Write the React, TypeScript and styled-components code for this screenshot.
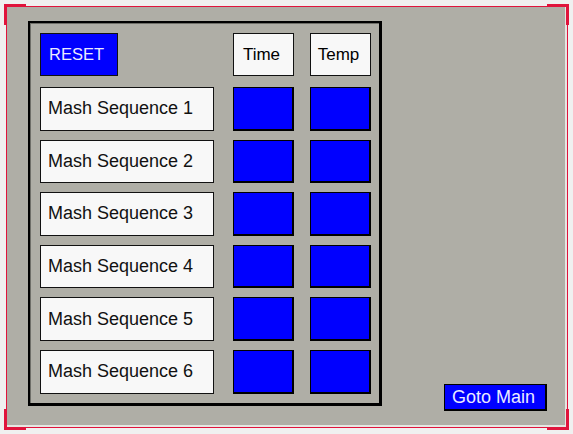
import React from "react";
import styled, { createGlobalStyle } from "styled-components";

const Global = createGlobalStyle`
  html, body { margin: 0; padding: 0; background: #f0f0f0; }
  body { font-family: "Liberation Sans", Arial, sans-serif; }
`;

const Page = styled.div`
  width: 573px;
  height: 434px;
  padding: 6px 0 0 6px;
  box-sizing: border-box;
  background: #f0f0f0;
`;

const Panel = styled.div`
  position: relative;
  width: 562px;
  height: 422px;
  box-sizing: border-box;
  border: 1px solid #e0143c;
  background: #afaea6;
  box-shadow: inset -2px -2px 0 #e6e6e2;
  display: flex;
  align-items: flex-start;
  padding: 14px 0 0 21px;
`;

type CornerProps = { $v: "top" | "bottom"; $h: "left" | "right" };

const Corner = styled.div<CornerProps>`
  position: absolute;
  width: 22px;
  height: 21px;
  box-sizing: border-box;
  ${(p) => p.$v}: -3px;
  ${(p) => p.$h}: ${(p) => (p.$h === "left" ? "-3px" : "-2px")};
  border-${(p) => p.$v}: 3px solid #e0143c;
  border-${(p) => p.$h}: 3px solid #e0143c;
  pointer-events: none;
`;

const Frame = styled.div`
  width: 354px;
  height: 385px;
  box-sizing: border-box;
  border-style: solid;
  border-color: #000;
  border-width: 2px 3px 3px 2px;
  box-shadow: inset 1px 1px 0 #6e6e68;
  padding: 10px 0 0 10px;
  display: grid;
  grid-template-columns: 177px 61px 61px;
  grid-template-rows: 45px repeat(6, 43.6px);
  column-gap: 16px;
  row-gap: 9px;
`;

const Cell = styled.div`
  box-sizing: border-box;
  border: 1px solid #111;
  display: flex;
  align-items: center;
`;

const ResetButton = styled(Cell)`
  width: 78px;
  height: 43px;
  align-self: start;
  background: #0000ff;
  color: #eaeaff;
  font-size: 16.5px;
  padding-left: 8px;
`;

const HeaderCell = styled(Cell)`
  height: 43px;
  align-self: start;
  background: #f8f8f8;
  color: #000;
  font-size: 17px;
  justify-content: center;
  padding-right: 4px;
`;

const Label = styled(Cell)`
  width: 174px;
  background: #f8f8f8;
  color: #111;
  font-size: 18px;
  padding-left: 7px;
`;

const ValueBox = styled(Cell)`
  background: #0000ff;
  border-color: #000;
  border-width: 1px 2px 2px 1px;
`;

const GotoButton = styled.div`
  align-self: flex-end;
  margin: 0 20px 16px auto;
  width: 103px;
  height: 27px;
  box-sizing: border-box;
  border: 1px solid #000;
  border-width: 1px 2px 2px 1px;
  background: #0000ff;
  color: #eaeaff;
  font-size: 18px;
  display: flex;
  align-items: center;
  padding-left: 7px;
`;

const rows = [1, 2, 3, 4, 5, 6];

export default function App() {
  return (
    <>
      <Global />
      <Page>
        <Panel>
          <Corner $v="top" $h="left" />
          <Corner $v="top" $h="right" />
          <Corner $v="bottom" $h="left" />
          <Corner $v="bottom" $h="right" />
          <Frame>
            <ResetButton>RESET</ResetButton>
            <HeaderCell>Time</HeaderCell>
            <HeaderCell>Temp</HeaderCell>
            {rows.map((n) => (
              <React.Fragment key={n}>
                <Label>Mash Sequence {n}</Label>
                <ValueBox />
                <ValueBox />
              </React.Fragment>
            ))}
          </Frame>
          <GotoButton>Goto Main</GotoButton>
        </Panel>
      </Page>
    </>
  );
}
